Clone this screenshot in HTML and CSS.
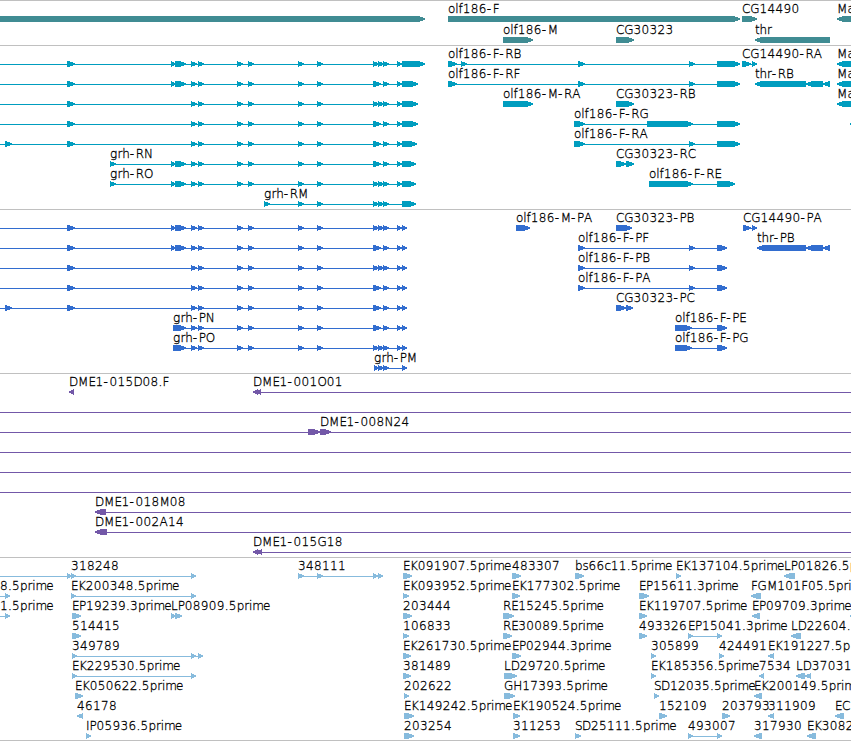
FILE: index.html
```
<!DOCTYPE html>
<html lang="en">
<head>
<meta charset="UTF-8">
<title>Genome Browser</title>
<link rel="stylesheet" href="styles.css">
</head>
<body>
<main class="tracks">
  <svg class="track genes" id="genes"></svg>
  <svg class="track transcripts" id="transcripts"></svg>
  <svg class="track proteins" id="proteins"></svg>
  <svg class="track clones" id="clones"></svg>
  <svg class="track insertions" id="insertions"></svg>
</main>
<script src="tracks.js"></script>
</body>
</html>
```
FILE: styles.css
```
body {
  margin: 0;
  background-color: #ffffff;
  overflow: hidden;
}
.tracks {
  display: flex;
  flex-direction: column;
  width: 851px;
  height: 741px;
  box-sizing: border-box;
  border-bottom: 1px solid #c0c0c0;
}
.track {
  display: block;
  flex: none;
  width: 100%;
  box-sizing: border-box;
  border-top: 1px solid #c0c0c0;
  overflow: hidden;
}
.genes {
  height: 45px;
  color: #408c93;
}
.transcripts {
  height: 164px;
  color: #009dbf;
}
.proteins {
  height: 164px;
  color: #326dcf;
}
.clones {
  height: 184px;
  color: #7358a8;
}
.insertions {
  height: 183px;
  color: #87bbdd;
}
.shape {
  fill: currentColor;
  shape-rendering: crispEdges;
}
.label {
  fill: #000000;
  stroke: #000000;
  stroke-width: 0.3px;
  font-family: "DejaVu Sans Light", "DejaVu Sans", sans-serif;
  font-size: 12px;
}
```
FILE: tracks.js
```
const SVG_NS = 'http://www.w3.org/2000/svg';
const END = 870; // just past the right edge
const ROW = 20;

// feature: [row, label, labelX, exons, direction, lineStart, lineEnd]
const R = 1;
const L = -1;

const triple = [[373, 379], [378, 384], [383, 389]];
const pair = [[373, 381], [383, 389]];
const middle = [[191, 197], [198, 204], [237, 243], [248, 254], [298, 304], [317, 323]];
const second = [[171, 176], [175, 186]];

function grh(start, tail, end) {
  return [...start, ...middle, ...tail, [397, 402], [402, end]];
}

const genes = [
  [0, '', 0, [[-10, 425]], R],
  [0, 'olf186-F', 448, [[448, 740]], R],
  [0, 'CG14490', 742, [[742, 757]], R],
  [0, 'Ma', 837, [[837, END]], L],
  [1, 'olf186-M', 503, [[503, 533]], R],
  [1, 'CG30323', 616, [[616, 634]], R],
  [1, 'thr', 755, [[755, 830]], L]
];

const transcripts = [
  [0, '', 0, grh([[67, 75], ...second], triple, 425), R, 0],
  [1, '', 0, grh([[67, 75], ...second], pair, 418), R, 0],
  [2, '', 0, grh([[67, 75]], triple, 418), R, 0],
  [3, '', 0, grh([[67, 75]], pair, 418), R, 0],
  [4, '', 0, grh([[5, 12], [67, 75]], pair, 417), R, 0],
  [5, 'grh-RN', 110, grh([[110, 116], ...second], pair, 416), R],
  [6, 'grh-RO', 110, grh([[110, 116], ...second], triple, 416), R],
  [7, 'grh-RM', 264, [[264, 270], [298, 304], [317, 323], ...triple, [402, 416]], R],
  [0, 'olf186-F-RB', 448, [[448, 457], [461, 467], [578, 585], [689, 695], [717, 740]], R],
  [1, 'olf186-F-RF', 448, [[448, 457], [578, 585], [689, 695], [717, 740]], R],
  [2, 'olf186-M-RA', 503, [[503, 533]], R],
  [2, 'CG30323-RB', 616, [[616, 634]], R],
  [3, 'olf186-F-RG', 574, [[574, 585], [647, 693], [717, 740]], R],
  [4, 'olf186-F-RA', 574, [[574, 585], [689, 695], [717, 740]], R],
  [5, 'CG30323-RC', 616, [[616, 626], [626, 634]], R],
  [6, 'olf186-F-RE', 649, [[649, 693], [717, 735]], R],
  [0, 'CG14490-RA', 742, [[742, 751], [752, 757]], R],
  [1, 'thr-RB', 755, [[755, 806], [806, 823], [823, 830]], L],
  [0, 'Ma', 837, [[837, END]], L],
  [1, 'Ma', 837, [[837, END]], L],
  [2, 'Ma', 837, [[837, END]], L],
  [3, '', 0, [[850, END]], L]
];

const proteins = [
  [0, '', 0, grh([[67, 75], ...second], triple, 407), R, 0],
  [1, '', 0, grh([[67, 75], ...second], pair, 407), R, 0],
  [2, '', 0, grh([[67, 75]], triple, 407), R, 0],
  [3, '', 0, grh([[67, 75]], pair, 407), R, 0],
  [4, '', 0, grh([[5, 12], [67, 75]], pair, 407), R, 0],
  [5, 'grh-PN', 173, grh([[173, 186]], pair, 407), R],
  [6, 'grh-PO', 173, grh([[173, 186]], triple, 407), R],
  [7, 'grh-PM', 374, [[374, 379], [378, 384], [383, 389], [402, 407]], R],
  [0, 'olf186-M-PA', 516, [[516, 530]], R],
  [0, 'CG30323-PB', 616, [[616, 632]], R],
  [1, 'olf186-F-PF', 578, [[578, 585], [689, 695], [717, 727]], R],
  [2, 'olf186-F-PB', 578, [[578, 585], [689, 695], [717, 727]], R],
  [3, 'olf186-F-PA', 578, [[578, 585], [689, 695], [717, 727]], R],
  [4, 'CG30323-PC', 616, [[616, 626], [626, 633]], R],
  [5, 'olf186-F-PE', 675, [[675, 692], [717, 727]], R],
  [6, 'olf186-F-PG', 675, [[675, 692], [717, 727]], R],
  [0, 'CG14490-PA', 743, [[743, 751], [752, 757]], R],
  [1, 'thr-PB', 757, [[757, 806], [806, 823], [823, 830]], L]
];

const clones = [
  [0, 'DME1-015D08.F', 69, [[69, 74]], L],
  [0, 'DME1-001O01', 253, [[253, 258], [256, 261]], L, 253, END],
  [1, '', 0, [], R, 0, END],
  [2, 'DME1-008N24', 320, [[308, 320], [320, 331]], R, 0, END],
  [3, '', 0, [], R, 0, END],
  [4, '', 0, [], R, 0, END],
  [5, '', 0, [], R, 0, END],
  [6, 'DME1-018M08', 95, [[95, 106]], L, 95, END],
  [7, 'DME1-002A14', 95, [[95, 107]], L, 95, END],
  [8, 'DME1-015G18', 253, [[253, 258], [256, 262]], L, 253, END]
];

const insertions = [
  [0, '', 0, [[67, 72]], R, 0],
  [0, '318248', 71, [[71, 76], [191, 196]], R],
  [0, '348111', 298, [[298, 304], [317, 323], [373, 378], [378, 383]], R],
  [0, 'EK091907.5prime', 403, [[403, 412]], R],
  [0, '483307', 512, [[512, 521]], R],
  [0, 'bs66c11.5prime', 575, [[575, 584]], R],
  [0, 'EK137104.5prime', 676, [[676, 681]], R],
  [0, 'LP01826.5p', 784, [[784, 795]], L],
  [1, '8.5prime', 0, [[5, 10]], R, 0],
  [1, 'EK200348.5prime', 71, [[71, 76], [191, 196]], R],
  [1, 'EK093952.5prime', 403, [[403, 409]], R],
  [1, 'EK177302.5prime', 512, [[512, 520]], R],
  [1, 'EP15611.3prime', 639, [[639, 649]], R],
  [1, 'FGM101F05.5pri', 751, [[751, 761]], L],
  [2, '1.5prime', 0, [[5, 10]], R, 0],
  [2, 'EP19239.3prime', 72, [[72, 81]], R],
  [2, 'LP08909.5prime', 171, [[171, 176], [175, 182]], R],
  [2, '203444', 403, [[403, 412]], R],
  [2, 'RE15245.5prime', 503, [[503, 514]], R],
  [2, 'EK119707.5prime', 639, [[639, 647]], R],
  [2, 'EP09709.3prime', 752, [[752, 760]], L],
  [2, '', 0, [[850, END]], L],
  [3, '514415', 72, [[72, 81]], R],
  [3, '106833', 403, [[403, 409]], R],
  [3, 'RE30089.5prime', 503, [[503, 512]], R],
  [3, '493326', 639, [[639, 647]], R],
  [3, 'EP15041.3prime', 688, [[688, 693], [717, 722]], R],
  [3, 'LD22604.', 791, [[791, 801]], L],
  [4, '349789', 72, [[72, 77], [191, 196], [198, 203]], R],
  [4, 'EK261730.5prime', 403, [[403, 411]], R],
  [4, 'EP02944.3prime', 512, [[512, 521]], R],
  [4, '305899', 651, [[651, 656]], R],
  [4, '424491', 719, [[719, 724]], R],
  [4, 'EK191227.5p', 768, [[768, 774]], L],
  [5, 'EK229530.5prime', 72, [[72, 77], [191, 196]], R],
  [5, '381489', 403, [[403, 411]], R],
  [5, 'LD29720.5prime', 504, [[504, 517]], R],
  [5, 'EK185356.5prime', 651, [[651, 656]], R],
  [5, '7534', 759, [[759, 764]], L],
  [5, 'LD37031', 796, [[796, 805], [805, 811]], L],
  [6, 'EK050622.5prime', 75, [[75, 83]], R],
  [6, '202622', 404, [[404, 409]], R],
  [6, 'GH17393.5prime', 504, [[504, 515]], R],
  [6, 'SD12035.5prime', 654, [[654, 659]], R],
  [6, 'EK200149.5prim', 754, [[754, 762]], L],
  [7, '46178', 77, [[77, 83]], L],
  [7, 'EK149242.5prime', 404, [[404, 414]], R],
  [7, 'EK190524.5prime', 513, [[513, 520]], R],
  [7, '152109', 659, [[659, 667]], R],
  [7, '203793', 722, [[722, 730]], R],
  [7, '311909', 768, [[768, 774]], L],
  [7, 'EC', 835, [[835, 844]], L],
  [8, 'IP05936.5prime', 86, [[86, 91]], R],
  [8, '203254', 404, [[404, 414]], R],
  [8, '311253', 513, [[513, 520]], R],
  [8, 'SD25111.5prime', 575, [[575, 581]], R],
  [8, '493007', 688, [[688, 693], [717, 722]], R],
  [8, '317930', 754, [[754, 762]], L],
  [8, 'EK3082', 807, [[807, 816]], L]
];

// label advance widths in px, digits are all 8
const ADVANCE = {
  '-': 6, '.': 4,
  A: 8.5, B: 7.5, C: 8.3, D: 9, E: 7, F: 6.6, G: 9.3, H: 9, I: 3.5, K: 7.7, L: 6.7,
  M: 10.4, N: 9, O: 9.3, P: 7, R: 8.2, S: 7,
  a: 7, b: 7.5, c: 6.3, e: 7, f: 4.2, g: 7.5, h: 7.5, i: 3.2, l: 3.2, m: 10.8,
  o: 7.3, p: 7.5, r: 4.8, s: 6, t: 4.5
};

// head profile: how far each pixel row stops short of the tip
const HEAD = [5, 2, 0, 0, 2, 5];

function add(svg, name, attrs, text) {
  const el = document.createElementNS(SVG_NS, name);
  for (const key in attrs) {
    el.setAttribute(key, attrs[key]);
  }
  if (text) {
    el.textContent = text;
  }
  svg.appendChild(el);
}

// x position of every letter
function positions(label, x) {
  return [...label].map((ch) => {
    const at = x;
    x += ADVANCE[ch] || 8;
    return at.toFixed(1);
  }).join(' ');
}

// bar with an arrow head at one end, 6px high
function arrow(x1, x2, y, dir) {
  const back = dir === R ? x1 : x2;
  const points = [`M${back} ${y - 3}`];
  HEAD.forEach((inset, i) => {
    const cut = Math.min(inset, x2 - x1 - 1);
    const x = dir === R ? x2 - cut : x1 + cut;
    points.push(`L${x} ${y - 3 + i}`, `L${x} ${y - 2 + i}`);
  });
  points.push(`L${back} ${y + 3}Z`);
  return points.join('');
}

function draw(id, features, rowHeight) {
  const svg = document.getElementById(id);
  features.forEach(([row, label, labelX, exons, dir, from, to]) => {
    const y = 18 + row * rowHeight;
    const start = from !== undefined ? from : exons[0][0];
    const end = to !== undefined ? to : exons[exons.length - 1][1] - 3;
    if (exons.length !== 1 || from !== undefined) {
      const inset = dir === L ? 3 : 0;
      add(svg, 'rect', { class: 'shape', x: start + inset, y: y, width: end - start - inset, height: 1 });
    }
    exons.forEach(([x1, x2]) => {
      add(svg, 'path', { class: 'shape', d: arrow(x1, x2, y, dir) });
    });
    if (label) {
      add(svg, 'text', { class: 'label', x: positions(label, labelX), y: y - 6 }, label);
    }
  });
}

draw('genes', genes, 21);
draw('transcripts', transcripts, ROW);
draw('proteins', proteins, ROW);
draw('clones', clones, ROW);
draw('insertions', insertions, ROW);
```
